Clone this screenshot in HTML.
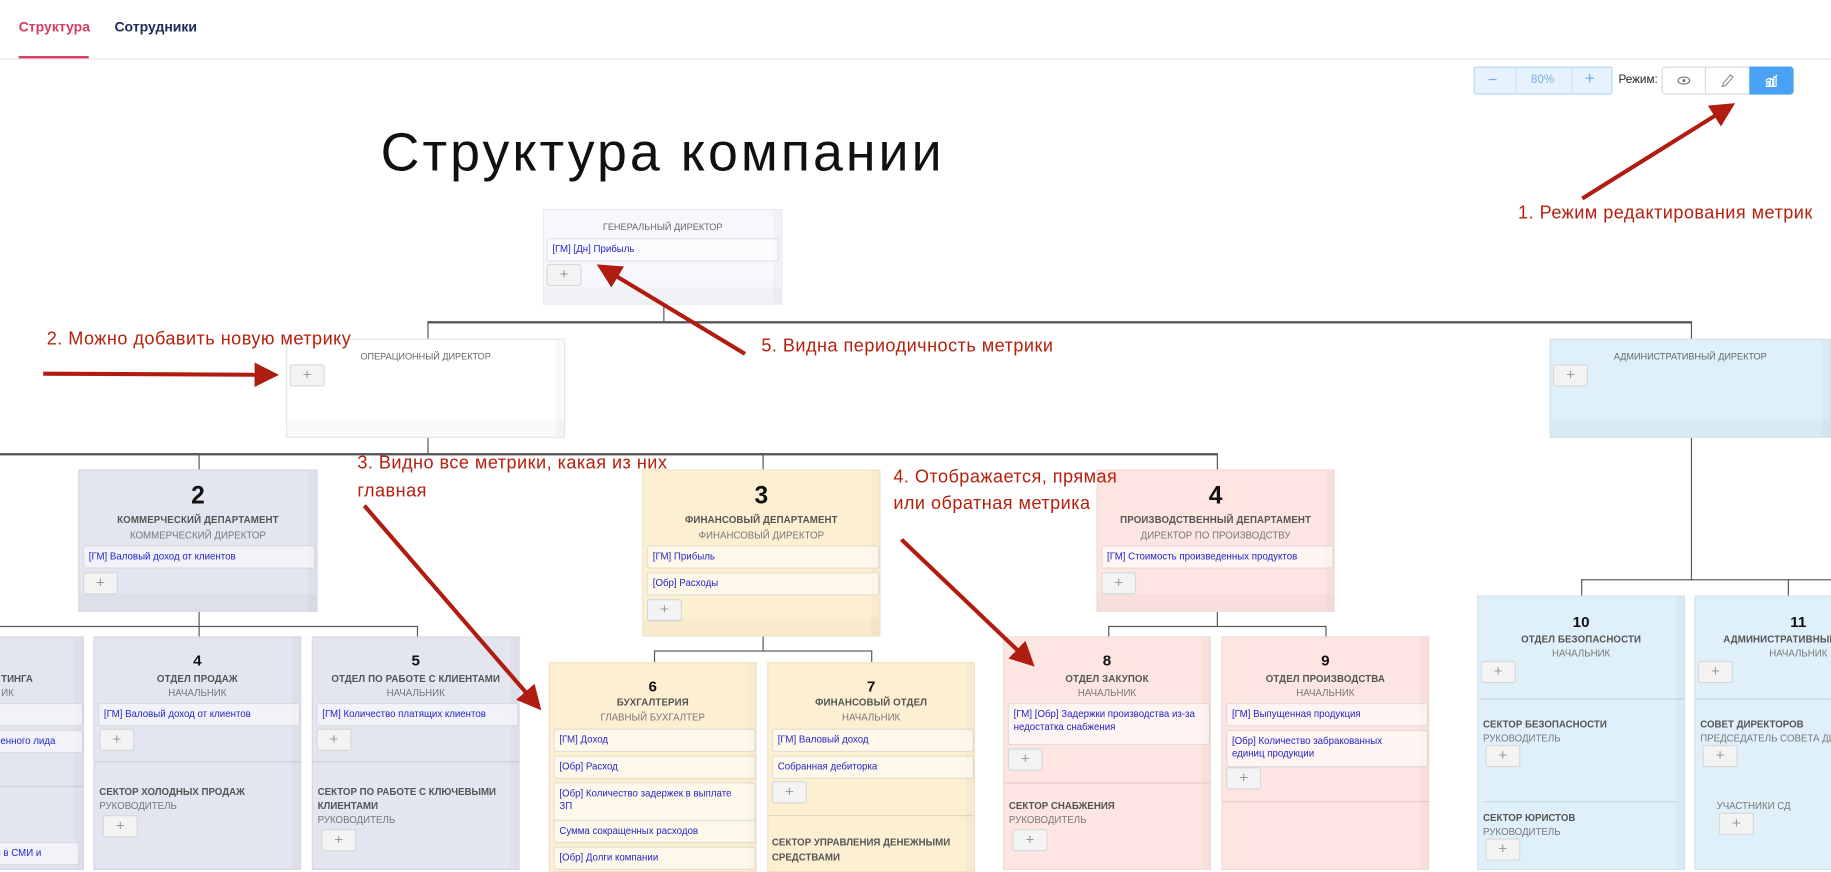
<!DOCTYPE html>
<html><head><meta charset="utf-8">
<style>
*{box-sizing:border-box;margin:0;padding:0}
html,body{width:1831px;height:862px;overflow:hidden;background:#fff}
#w{position:absolute;left:0;top:0;width:1568px;height:738px;transform:scale(1.16773);transform-origin:0 0;font-family:"Liberation Sans","DejaVu Sans",sans-serif}
.a{position:absolute}
.ln{position:absolute;background:#555}
.box{position:absolute;border:1px solid rgba(0,0,0,0.06);box-shadow:inset -7px 0 0 rgba(0,0,0,0.025)}
.box .bt{position:absolute;left:0;right:0;height:14px;background:rgba(0,0,0,0.025)}
.gray{background:#f7f8fc}
.wht{background:#fff;border-color:#e6e6e6}
.lav{background:#e3e5f1}
.yel{background:#fdf0d2}
.pnk{background:#fde6e1}
.blu{background:#dff0fb}
.ttl{position:absolute;left:0;right:0;text-align:center;font-size:8.3px;color:#555;font-weight:bold;letter-spacing:.1px;white-space:nowrap}
.sub{position:absolute;left:0;right:0;text-align:center;font-size:8.3px;color:#777;white-space:nowrap}
.st{position:absolute;font-size:8.3px;color:#555;font-weight:bold;white-space:nowrap}
.ss{position:absolute;font-size:8.3px;color:#777;white-space:nowrap}
.num{position:absolute;left:0;right:0;text-align:center;font-weight:bold;color:#111}
.m{position:absolute;border:1px solid rgba(0,0,0,0.1);background:rgba(255,255,255,0.55);border-radius:2px;font-size:8.3px;color:#2424c8;padding:3px 4px;line-height:11px}
.p{position:absolute;width:30px;height:19px;border:1px solid #d8d8d8;background:#f3f3f3;border-radius:2px;color:#999;font-size:13px;line-height:16px;text-align:center;font-weight:300}
.dv{position:absolute;left:0;right:0;height:1px;background:rgba(0,0,0,0.1)}
.an{position:absolute;color:#b5200f;font-size:15.5px;white-space:nowrap;letter-spacing:.4px}
</style></head><body><div id="w">

<div class="a" style="left:0;top:50px;width:1568px;height:1px;background:#e6e6e6"></div>
<div class="a" style="left:16px;top:16px;font-size:12px;font-weight:bold;color:#d43c60">Структура</div>
<div class="a" style="left:16px;top:48px;width:60px;height:2px;background:#d43c60"></div>
<div class="a" style="left:98px;top:16px;font-size:12px;font-weight:bold;color:#1e2a5a">Сотрудники</div>

<div class="a" style="left:1262px;top:57px;width:119px;height:24px;background:#e6f2fd;border:1px solid #b9d9f6;border-radius:2px"></div>
<div class="a" style="left:1298px;top:58px;width:1px;height:22px;background:#cfe4f8"></div>
<div class="a" style="left:1346px;top:58px;width:1px;height:22px;background:#cfe4f8"></div>
<div class="a" style="left:1274px;top:60px;font-size:14px;color:#7aaee8">−</div>
<div class="a" style="left:1311px;top:63px;font-size:10px;color:#7aaee8">80%</div>
<div class="a" style="left:1357px;top:59px;font-size:15px;color:#7aaee8">+</div>
<div class="a" style="left:1386px;top:63px;font-size:10px;color:#222">Режим:</div>
<div class="a" style="left:1423px;top:57px;width:113px;height:24px;border:1px solid #dcdcdc;border-radius:3px;background:#fff"></div>
<div class="a" style="left:1460px;top:57px;width:1px;height:24px;background:#dcdcdc"></div>
<div class="a" style="left:1498px;top:57px;width:38px;height:24px;background:#4aa2f5;border-radius:0 3px 3px 0"></div>
<svg class="a" style="left:1423px;top:57px" width="113" height="24">
<ellipse cx="19" cy="12" rx="5" ry="3" fill="none" stroke="#777" stroke-width="1"/><circle cx="19" cy="12" r="1.3" fill="#777"/>
<path d="M52 17 L53 14 L59 7 L61 9 L55 16 Z" fill="none" stroke="#888" stroke-width="0.9"/>
<path d="M89 17h9M90 17v-4h2v4M93 17v-6h2v6M96 17v-8h2v8M89 12l3-2 3 1 4-4" fill="none" stroke="#fff" stroke-width="1"/>
</svg>

<div class="a" style="left:326px;top:103px;font-size:46px;color:#111;letter-spacing:2.6px">Структура компании</div>

<div class="ln" style="left:568px;top:261px;width:1px;height:15px"></div>
<div class="ln" style="left:366px;top:275px;width:1083px;height:2px"></div>
<div class="ln" style="left:366px;top:276px;width:1px;height:14px"></div>
<div class="ln" style="left:1448px;top:276px;width:1px;height:14px"></div>
<div class="ln" style="left:366px;top:375px;width:1px;height:14px"></div>
<div class="ln" style="left:0;top:388px;width:1043px;height:2px"></div>
<div class="ln" style="left:170px;top:389px;width:1px;height:13px"></div>
<div class="ln" style="left:653px;top:389px;width:1px;height:13px"></div>
<div class="ln" style="left:1042px;top:389px;width:1px;height:13px"></div>
<div class="ln" style="left:170px;top:524px;width:1px;height:21px"></div>
<div class="ln" style="left:0;top:536px;width:358px;height:1px"></div>
<div class="ln" style="left:357px;top:536px;width:1px;height:9px"></div>
<div class="ln" style="left:653px;top:545px;width:1px;height:12px"></div>
<div class="ln" style="left:560px;top:557px;width:187px;height:1px"></div>
<div class="ln" style="left:560px;top:557px;width:1px;height:10px"></div>
<div class="ln" style="left:746px;top:557px;width:1px;height:10px"></div>
<div class="ln" style="left:1042px;top:524px;width:1px;height:12px"></div>
<div class="ln" style="left:949px;top:536px;width:187px;height:1px"></div>
<div class="ln" style="left:949px;top:536px;width:1px;height:9px"></div>
<div class="ln" style="left:1135px;top:536px;width:1px;height:9px"></div>
<div class="ln" style="left:1448px;top:375px;width:1px;height:122px"></div>
<div class="ln" style="left:1354px;top:496px;width:214px;height:1px"></div>
<div class="ln" style="left:1354px;top:496px;width:1px;height:14px"></div>
<div class="ln" style="left:1531px;top:496px;width:1px;height:14px"></div>

<div class="box gray" style="left:465px;top:179px;width:205px;height:82px">
<div class="sub" style="top:10px;font-size:7.8px;color:#666">ГЕНЕРАЛЬНЫЙ ДИРЕКТОР</div>
<div class="m" style="left:2px;top:24px;width:199px;height:20px">[ГМ] [Дн] Прибыль</div>
<div class="p" style="left:2px;top:46px">+</div>
<div class="bt" style="bottom:0"></div></div>

<div class="box wht" style="left:245px;top:290px;width:239px;height:85px">
<div class="sub" style="top:10px;font-size:7.8px;color:#666">ОПЕРАЦИОННЫЙ ДИРЕКТОР</div>
<div class="p" style="left:2px;top:21px">+</div>
<div class="bt" style="bottom:0"></div></div>

<div class="box blu" style="left:1327px;top:290px;width:241px;height:85px">
<div class="sub" style="top:10px;font-size:7.8px;color:#666">АДМИНИСТРАТИВНЫЙ ДИРЕКТОР</div>
<div class="p" style="left:2px;top:21px">+</div>
<div class="bt" style="bottom:0"></div></div>

<div class="box lav" style="left:67px;top:402px;width:205px;height:122px">
<div class="num" style="top:10px;font-size:21px">2</div>
<div class="ttl" style="top:37px">КОММЕРЧЕСКИЙ ДЕПАРТАМЕНТ</div>
<div class="sub" style="top:50px">КОММЕРЧЕСКИЙ ДИРЕКТОР</div>
<div class="m" style="left:3px;top:64px;width:199px;height:20px">[ГМ] Валовый доход от клиентов</div>
<div class="p" style="left:3px;top:87px">+</div>
<div class="bt" style="bottom:0"></div></div>

<div class="box yel" style="left:550px;top:402px;width:204px;height:143px">
<div class="num" style="top:10px;font-size:21px">3</div>
<div class="ttl" style="top:37px">ФИНАНСОВЫЙ ДЕПАРТАМЕНТ</div>
<div class="sub" style="top:50px">ФИНАНСОВЫЙ ДИРЕКТОР</div>
<div class="m" style="left:3px;top:64px;width:199px;height:20px">[ГМ] Прибыль</div>
<div class="m" style="left:3px;top:87px;width:199px;height:20px">[Обр] Расходы</div>
<div class="p" style="left:3px;top:110px">+</div>
<div class="bt" style="bottom:0"></div></div>

<div class="box pnk" style="left:939px;top:402px;width:204px;height:122px">
<div class="num" style="top:10px;font-size:21px">4</div>
<div class="ttl" style="top:37px">ПРОИЗВОДСТВЕННЫЙ ДЕПАРТАМЕНТ</div>
<div class="sub" style="top:50px">ДИРЕКТОР ПО ПРОИЗВОДСТВУ</div>
<div class="m" style="left:3px;top:64px;width:199px;height:20px">[ГМ] Стоимость произведенных продуктов</div>
<div class="p" style="left:3px;top:87px">+</div>
<div class="bt" style="bottom:0"></div></div>

<div class="box lav" style="left:-110px;top:545px;width:182px;height:200px">
<div class="st" style="left:110px;top:30px">ТИНГА</div>
<div class="ss" style="left:110px;top:42px">ИК</div>
<div class="m" style="left:100px;top:56px;width:80px;height:20px"></div>
<div class="m" style="left:100px;top:79px;width:80px;height:20px">ченного лида</div>
<div class="dv" style="top:127px"></div>
<div class="m" style="left:100px;top:175px;width:77px;height:20px">й в СМИ и</div></div>

<div class="box lav" style="left:80px;top:545px;width:178px;height:200px">
<div class="num" style="top:12px;font-size:13px">4</div>
<div class="ttl" style="top:30px">ОТДЕЛ ПРОДАЖ</div>
<div class="sub" style="top:42px">НАЧАЛЬНИК</div>
<div class="m" style="left:3px;top:56px;width:173px;height:20px">[ГМ] Валовый доход от клиентов</div>
<div class="p" style="left:4px;top:78px">+</div>
<div class="dv" style="top:106px"></div>
<div class="st" style="left:4px;top:127px">СЕКТОР ХОЛОДНЫХ ПРОДАЖ</div>
<div class="ss" style="left:4px;top:139px">РУКОВОДИТЕЛЬ</div>
<div class="p" style="left:7px;top:152px">+</div></div>

<div class="box lav" style="left:267px;top:545px;width:178px;height:200px">
<div class="num" style="top:12px;font-size:13px">5</div>
<div class="ttl" style="top:30px">ОТДЕЛ ПО РАБОТЕ С КЛИЕНТАМИ</div>
<div class="sub" style="top:42px">НАЧАЛЬНИК</div>
<div class="m" style="left:3px;top:56px;width:173px;height:20px">[ГМ] Количество платящих клиентов</div>
<div class="p" style="left:3px;top:78px">+</div>
<div class="dv" style="top:106px"></div>
<div class="st" style="left:4px;top:127px">СЕКТОР ПО РАБОТЕ С КЛЮЧЕВЫМИ</div>
<div class="st" style="left:4px;top:139px">КЛИЕНТАМИ</div>
<div class="ss" style="left:4px;top:151px">РУКОВОДИТЕЛЬ</div>
<div class="p" style="left:7px;top:164px">+</div></div>

<div class="box yel" style="left:470px;top:567px;width:178px;height:180px">
<div class="num" style="top:12px;font-size:13px">6</div>
<div class="ttl" style="top:28px">БУХГАЛТЕРИЯ</div>
<div class="sub" style="top:41px">ГЛАВНЫЙ БУХГАЛТЕР</div>
<div class="m" style="left:3px;top:56px;width:173px;height:20px">[ГМ] Доход</div>
<div class="m" style="left:3px;top:79px;width:173px;height:20px">[Обр] Расход</div>
<div class="m" style="left:3px;top:102px;width:173px;height:34px">[Обр] Количество задержек в выплате<br>ЗП</div>
<div class="m" style="left:3px;top:134px;width:173px;height:20px">Сумма сокращенных расходов</div>
<div class="m" style="left:3px;top:157px;width:173px;height:20px">[Обр] Долги компании</div></div>

<div class="box yel" style="left:657px;top:567px;width:178px;height:180px">
<div class="num" style="top:12px;font-size:13px">7</div>
<div class="ttl" style="top:28px">ФИНАНСОВЫЙ ОТДЕЛ</div>
<div class="sub" style="top:41px">НАЧАЛЬНИК</div>
<div class="m" style="left:3px;top:56px;width:173px;height:20px">[ГМ] Валовый доход</div>
<div class="m" style="left:3px;top:79px;width:173px;height:20px">Собранная дебиторка</div>
<div class="p" style="left:3px;top:101px">+</div>
<div class="dv" style="top:130px"></div>
<div class="st" style="left:3px;top:148px">СЕКТОР УПРАВЛЕНИЯ ДЕНЕЖНЫМИ</div>
<div class="st" style="left:3px;top:161px">СРЕДСТВАМИ</div></div>

<div class="box pnk" style="left:859px;top:545px;width:178px;height:200px">
<div class="num" style="top:12px;font-size:13px">8</div>
<div class="ttl" style="top:30px">ОТДЕЛ ЗАКУПОК</div>
<div class="sub" style="top:42px">НАЧАЛЬНИК</div>
<div class="m" style="left:3px;top:56px;width:173px;height:36px">[ГМ] [Обр] Задержки производства из-за недостатка снабжения</div>
<div class="p" style="left:3px;top:95px">+</div>
<div class="dv" style="top:124px"></div>
<div class="st" style="left:4px;top:139px">СЕКТОР СНАБЖЕНИЯ</div>
<div class="ss" style="left:4px;top:151px">РУКОВОДИТЕЛЬ</div>
<div class="p" style="left:7px;top:164px">+</div></div>

<div class="box pnk" style="left:1046px;top:545px;width:178px;height:200px">
<div class="num" style="top:12px;font-size:13px">9</div>
<div class="ttl" style="top:30px">ОТДЕЛ ПРОИЗВОДСТВА</div>
<div class="sub" style="top:42px">НАЧАЛЬНИК</div>
<div class="m" style="left:3px;top:56px;width:173px;height:20px">[ГМ] Выпущенная продукция</div>
<div class="m" style="left:3px;top:79px;width:173px;height:32px">[Обр] Количество забракованных<br>единиц продукции</div>
<div class="p" style="left:3px;top:111px">+</div>
<div class="dv" style="top:140px"></div></div>

<div class="box blu" style="left:1265px;top:510px;width:178px;height:235px">
<div class="num" style="top:14px;font-size:13px">10</div>
<div class="ttl" style="top:31px">ОТДЕЛ БЕЗОПАСНОСТИ</div>
<div class="sub" style="top:43px">НАЧАЛЬНИК</div>
<div class="p" style="left:2px;top:55px">+</div>
<div class="dv" style="top:87px"></div>
<div class="st" style="left:4px;top:104px">СЕКТОР БЕЗОПАСНОСТИ</div>
<div class="ss" style="left:4px;top:116px">РУКОВОДИТЕЛЬ</div>
<div class="p" style="left:6px;top:127px">+</div>
<div class="a" style="left:4px;right:6px;top:175px;height:1px;background:rgba(0,0,0,0.1)"></div>
<div class="st" style="left:4px;top:184px">СЕКТОР ЮРИСТОВ</div>
<div class="ss" style="left:4px;top:196px">РУКОВОДИТЕЛЬ</div>
<div class="p" style="left:6px;top:207px">+</div></div>

<div class="box blu" style="left:1451px;top:510px;width:178px;height:235px">
<div class="num" style="top:14px;font-size:13px">11</div>
<div class="ttl" style="top:31px">АДМИНИСТРАТИВНЫЙ ОТДЕЛ</div>
<div class="sub" style="top:43px">НАЧАЛЬНИК</div>
<div class="p" style="left:2px;top:55px">+</div>
<div class="dv" style="top:87px"></div>
<div class="st" style="left:4px;top:104px">СОВЕТ ДИРЕКТОРОВ</div>
<div class="ss" style="left:4px;top:116px">ПРЕДСЕДАТЕЛЬ СОВЕТА ДИРЕКТОРОВ</div>
<div class="p" style="left:6px;top:127px">+</div>
<div class="ss" style="left:18px;top:174px">УЧАСТНИКИ СД</div>
<div class="p" style="left:20px;top:185px">+</div></div>

<div class="an" style="left:1300px;top:174px">1. Режим редактирования метрик</div>
<div class="an" style="left:40px;top:282px">2. Можно добавить новую метрику</div>
<div class="an" style="left:652px;top:288px">5. Видна периодичность метрики</div>
<div class="an" style="left:306px;top:388px">3. Видно все метрики, какая из них</div>
<div class="an" style="left:306px;top:412px">главная</div>
<div class="an" style="left:765px;top:400px">4. Отображается, прямая</div>
<div class="an" style="left:765px;top:423px">или обратная метрика</div>

<svg class="a" style="left:0;top:0" width="1568" height="738">
<defs><marker id="ah" markerWidth="6" markerHeight="6" refX="4" refY="3" orient="auto" markerUnits="strokeWidth"><path d="M0,0 L6,3 L0,6 Z" fill="#b01c0f"/></marker></defs>
<g stroke="#b01c0f" stroke-width="3.5" fill="none" marker-end="url(#ah)">
<line x1="1355" y1="170" x2="1480" y2="92"/>
<line x1="37" y1="320" x2="232" y2="321"/>
<line x1="638" y1="303" x2="517" y2="230"/>
<line x1="312" y1="433" x2="459" y2="603"/>
<line x1="772" y1="462" x2="881" y2="566"/>
</g></svg>

</div></body></html>
